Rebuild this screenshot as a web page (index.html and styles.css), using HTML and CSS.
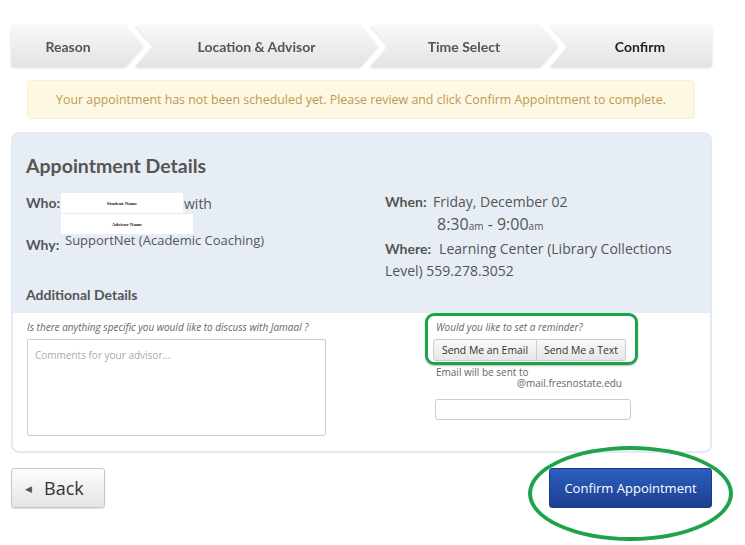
FILE: index.html
```html
<!DOCTYPE html>
<html>
<head>
  <meta charset="UTF-8">
  <title>Confirm Appointment</title>
  <link rel="stylesheet" href="styles.css">
</head>
<body>
<div class="page">

  <div class="steps">
    <div class="step s1">Reason</div>
    <div class="step s2">Location &amp; Advisor</div>
    <div class="step s3">Time Select</div>
    <div class="step s4 current">Confirm</div>
  </div>

  <div class="alert">Your appointment has not been scheduled yet. Please review and click Confirm Appointment to complete.</div>

  <div class="panel">
    <div class="panel-top">
      <h2>Appointment Details</h2>
      <div class="summary">
        <div class="col left">
          <div class="row who">
            <span class="label">Who:</span>
            <div class="names">
              <div class="line"><span class="redact student">Student Name</span>with</div>
              <span class="redact advisor">Advisor Name</span>
            </div>
          </div>
          <div class="row why">
            <span class="label">Why:</span>
            <span class="value">SupportNet (Academic Coaching)</span>
          </div>
        </div>
        <div class="col right">
          <div class="row when">
            <span class="label">When:</span>
            <div class="value">
              Friday, December 02
              <div class="time">8:30<small>am</small> - 9:00<small>am</small></div>
            </div>
          </div>
          <p class="where"><span class="label">Where:</span><span>Learning Center (Library Collections</span><br><span>Level) 559.278.3052</span></p>
        </div>
      </div>
      <h3>Additional Details</h3>
    </div>

    <div class="panel-bottom">
      <div class="comments">
        <p class="hint">Is there anything specific you would like to discuss with Jamaal ?</p>
        <textarea placeholder="Comments for your advisor..."></textarea>
      </div>
      <div class="reminder">
        <p class="hint">Would you like to set a reminder?</p>
        <div class="btn-group">
          <button class="email">Send Me an Email</button><button class="text">Send Me a Text</button>
        </div>
        <p class="sent">Email will be sent to<span>@mail.fresnostate.edu</span></p>
        <input type="text">
        <div class="mark-box"></div>
      </div>
    </div>
  </div>

  <div class="actions">
    <button class="btn back"><span class="arrow">&#9664;</span>Back</button>
    <button class="btn confirm">Confirm Appointment</button>
    <div class="mark-ring"></div>
  </div>

</div>
</body>
</html>
```

FILE: styles.css
```css
body {
  margin: 0;
  background-color: #fff;
  font-family: "Open Sans", sans-serif;
  color: #555;
}

.page {
  width: 701px;
  margin-left: 11px;
  padding-top: 25px;
  padding-bottom: 40px;
}

/* wizard steps */
.steps {
  display: flex;
  height: 42px;
  filter: drop-shadow(0 1px 1px rgba(0, 0, 0, 0.14));
}

.step {
  box-sizing: border-box;
  display: flex;
  align-items: center;
  justify-content: center;
  padding: 0 18px;
  margin-left: -8px;
  background: linear-gradient(#f8f8f8, #e3e3e3);
  font-family: Lato, sans-serif;
  font-weight: 700;
  font-size: 14px;
  color: #555;
  clip-path: polygon(0 0, calc(100% - 18px) 0, 100% 50%, calc(100% - 18px) 100%, 0 100%, 18px 50%);
}
.step.s1 {
  width: 132px;
  margin-left: 0;
  padding-left: 0;
  border-radius: 4px 0 0 4px;
  clip-path: polygon(0 0, calc(100% - 18px) 0, 100% 50%, calc(100% - 18px) 100%, 0 100%);
}
.step.s2 { width: 243px; }
.step.s3 { width: 188px; }
.step.s4 {
  width: 162px;
  padding-right: 0;
  border-radius: 0 4px 4px 0;
  clip-path: polygon(0 0, 100% 0, 100% 100%, 0 100%, 18px 50%);
}
.step.current { color: #222; }

.alert {
  margin: 13px 17px 0 16px;
  padding: 9px 0;
  line-height: 19px;
  background-color: #fcf8e3;
  border: 1px solid #f9efd6;
  border-radius: 3px;
  color: #c09853;
  font-size: 12.4px;
  text-align: center;
}

/* details panel */
.panel {
  margin-top: 13px;
  background-color: #e7edf4;
  border: 1px solid #e1e8f0;
  border-radius: 8px;
}

.panel-top {
  padding: 21px 15px 10px 14px;
}

.panel h2 {
  margin: 0;
  font-family: Lato, sans-serif;
  font-size: 19.5px;
  line-height: 23px;
  color: #555;
}

.summary {
  display: grid;
  grid-template-columns: 359px 1fr;
}

.label {
  font-family: Lato, sans-serif;
  font-weight: 700;
  font-size: 14px;
  color: #555;
}

.row {
  display: flex;
}

.left {
  padding-top: 16px;
}
.who .label {
  width: 35px;
  line-height: 20px;
}
.names .line {
  display: flex;
  align-items: center;
  height: 20px;
  font-size: 14px;
}
.redact {
  display: flex;
  align-items: center;
  justify-content: center;
  height: 20px;
  background-color: #fff;
  font-family: "Liberation Serif", serif;
  font-weight: 700;
  font-size: 5px;
  color: #222;
}
.redact.student { width: 122px; margin-right: 1px; }
.redact.advisor { width: 132px; margin-top: 1px; }

.why {
  margin-top: -3px;
}
.why .label {
  width: 39px;
  padding-top: 5px;
  line-height: 18px;
}
.why .value {
  font-size: 13px;
  line-height: 18px;
  color: #555;
}

.right {
  padding-top: 15px;
}
.when .label {
  width: 48px;
  line-height: 20px;
}
.when .value {
  font-size: 14px;
  line-height: 20px;
}
.time {
  padding-left: 4px;
  font-size: 16px;
  line-height: 24px;
}
.time small {
  font-size: 10px;
}

.where {
  margin: 0;
  font-size: 14px;
  line-height: 22px;
}
.where .label {
  line-height: 18px;
  margin-right: 8px;
}

.panel h3 {
  margin: 4px 0 0;
  font-family: Lato, sans-serif;
  font-size: 14px;
  line-height: 17px;
  color: #555;
}

.panel-bottom {
  display: grid;
  grid-template-columns: 406px 1fr;
  margin: 0 1px 1px;
  padding: 7px 0 15px 14px;
  background-color: #fff;
  border-radius: 0 0 7px 7px;
}

.hint {
  margin: 0 0 5px;
  font-size: 10px;
  font-style: italic;
  line-height: 14px;
  color: #666;
}

textarea {
  display: block;
  box-sizing: border-box;
  width: 299px;
  height: 97px;
  padding: 8px 7px;
  border: 1px solid #ccc;
  border-radius: 2px;
  font-family: "Open Sans", sans-serif;
  font-size: 10px;
  resize: none;
}
textarea::placeholder {
  color: #aaa;
}

.reminder {
  position: relative;
}
.reminder .hint {
  padding-left: 3px;
}

.btn-group {
  display: flex;
}
.btn-group button {
  box-sizing: border-box;
  height: 22px;
  padding: 0;
  border: 1px solid #ccc;
  background: linear-gradient(#f9f9f9, #e6e6e6);
  font-family: "Open Sans", sans-serif;
  font-size: 10.4px;
  color: #333;
}
.btn-group .email {
  width: 104px;
  border-radius: 3px 0 0 3px;
}
.btn-group .text {
  width: 89px;
  border-left: none;
  border-radius: 0 3px 3px 0;
}

.sent {
  width: 186px;
  margin: 6px 0 0;
  padding-left: 3px;
  font-size: 10px;
  line-height: 11px;
  color: #666;
}
.sent span {
  display: block;
  text-align: right;
}

.reminder input {
  display: block;
  box-sizing: border-box;
  width: 196px;
  height: 21px;
  margin: 10px 0 0 2px;
  border: 1px solid #ccc;
  border-radius: 3px;
}

/* green annotation marks */
.mark-box {
  position: absolute;
  top: -7px;
  left: -8px;
  width: 213px;
  height: 52px;
  box-sizing: border-box;
  border: 3.5px solid #1ea34a;
  border-radius: 9px;
  box-shadow: 0 1px 2px rgba(0, 0, 0, 0.25);
}

.actions {
  position: relative;
  display: flex;
  justify-content: space-between;
  margin-top: 15px;
}

.btn {
  box-sizing: border-box;
  height: 40px;
  border-radius: 3px;
  font-family: "Open Sans", sans-serif;
  cursor: pointer;
}
.back {
  width: 94px;
  padding: 0 0 0 13px;
  text-align: left;
  border: 1px solid #c8c8c8;
  background: linear-gradient(#fdfdfd, #e4e4e4);
  box-shadow: 0 1px 1px rgba(0, 0, 0, 0.12);
  font-size: 18px;
  color: #333;
}
.back .arrow {
  font-size: 9px;
  margin-right: 12px;
  vertical-align: 3px;
  color: #555;
}
.confirm {
  width: 163px;
  border: 1px solid #1a3c85;
  background: linear-gradient(#2d5fbd, #1b3f92);
  font-size: 13px;
  color: #fff;
}

.mark-ring {
  position: absolute;
  top: -22px;
  left: 517px;
  width: 205px;
  height: 95px;
  box-sizing: border-box;
  border: 4px solid #1ea34a;
  border-radius: 50%;
}
```
